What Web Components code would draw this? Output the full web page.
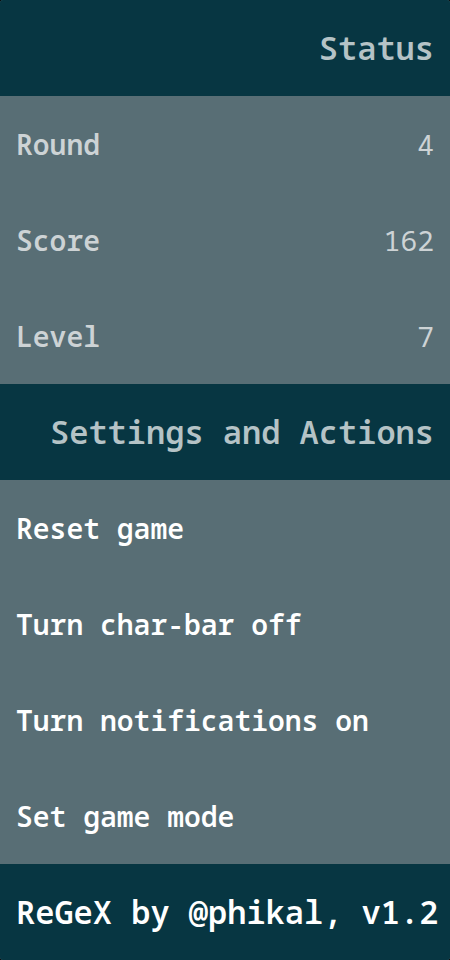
<!DOCTYPE html>
<html lang="en"><head><meta charset="utf-8"><meta name="viewport" content="width=device-width, initial-scale=1"><title>ReGeX</title>
<style>
body{margin:0;background:#000}
</style></head><body>
<menu-panel>
<menu-heading>Status</menu-heading>
<stat-row>Round<span slot="value">4</span></stat-row>
<stat-row>Score<span slot="value">162</span></stat-row>
<stat-row>Level<span slot="value">7</span></stat-row>
<menu-heading>Settings and Actions</menu-heading>
<menu-action>Reset game</menu-action>
<menu-action>Turn char-bar off</menu-action>
<menu-action>Turn notifications on</menu-action>
<menu-action>Set game mode</menu-action>
<menu-credit>ReGeX by @phikal, v1.2</menu-credit>
</menu-panel>
<script>
function define(name, html){
  customElements.define(name, class extends HTMLElement{
    constructor(){
      super();
      this.attachShadow({mode:'open'}).innerHTML = html;
    }
  });
}

define('menu-heading', `
<style>
:host{display:block;padding:28px 16px;background:#073642;color:#b5c3c6}
h2{margin:0;font-size:32px;line-height:40px;font-weight:600;text-align:right}
</style>
<h2><slot></slot></h2>`);

define('stat-row', `
<style>
:host{display:flex;justify-content:space-between;padding:28px 16px;line-height:40px;color:#cdd3d5}
.label{font-weight:600}
</style>
<span class="label"><slot></slot></span><span><slot name="value"></slot></span>`);

define('menu-action', `
<style>
:host{display:block}
button{display:block;width:100%;padding:28px 16px;border:0;background:none;color:#fff;font:inherit;line-height:40px;font-weight:600;text-align:left;cursor:pointer}
</style>
<button type="button"><slot></slot></button>`);

define('menu-credit', `
<style>
:host{display:block}
a{display:block;padding:28px 0 28px 16px;background:#073642;color:#fff;font-size:32px;line-height:40px;font-weight:600;text-decoration:none}
</style>
<a href="#"><slot></slot></a>`);

define('menu-panel', `
<style>
:host{display:block;overflow:hidden;border-radius:3px;background:#586e75;font:28px/40px "Noto Sans Mono","DejaVu Sans Mono",monospace}
</style>
<slot></slot>`);
</script></body></html>
